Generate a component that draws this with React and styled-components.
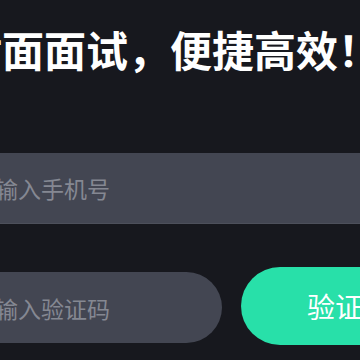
import styled, { createGlobalStyle } from 'styled-components'

const GlobalStyle = createGlobalStyle`
  html, body {
    margin: 0;
    padding: 0;
    background: #17181e;
  }
  body {
    font-family: "Noto Sans CJK SC", "Noto Sans", sans-serif;
  }
`

const Screen = styled.div`
  width: 360px;
  height: 360px;
  overflow: hidden;
  background: #17181e;
`

const Content = styled.div`
  width: 535px;
  margin-left: -78px;
  padding-top: 28px;
  display: flex;
  flex-direction: column;
`

const Title = styled.h1`
  margin: 0 0 0 -4px;
  font-size: 42px;
  line-height: 41px;
  font-weight: 700;
  color: #ffffff;
  white-space: nowrap;
`

const Fields = styled.div`
  margin-top: 84px;
  margin-left: 22px;
  display: flex;
  flex-direction: column;
  gap: 43px;
`

const Input = styled.input`
  box-sizing: border-box;
  height: 71px;
  width: 100%;
  padding: 0 0 0 28px;
  border: none;
  outline: none;
  background: #434652;
  border-radius: ${(p) => (p.$pill ? '36px' : '0')};
  border-bottom: ${(p) => (p.$pill ? 'none' : '1px solid #4d505b')};
  font-family: "Noto Sans CJK SC", "Noto Sans", sans-serif;
  font-size: 23px;
  color: #ffffff;

  &::placeholder {
    color: #858892;
  }
`

const CodeRow = styled.div`
  display: flex;
  align-items: center;
  gap: 19px;

  > input {
    flex: 1 1 auto;
    margin-top: 3px;
  }
`

const CodeButton = styled.button`
  flex: 0 0 216px;
  height: 78px;
  border: none;
  border-radius: 39px;
  background: #28e0a9;
  color: #ffffff;
  font-family: "Noto Sans CJK SC", "Noto Sans", sans-serif;
  font-size: 28px;
  padding: 0;
  cursor: pointer;
`

export default function App() {
  return (
    <>
      <GlobalStyle />
      <Screen>
        <Content>
          <Title>面对面面试，便捷高效！</Title>
          <Fields>
            <Input type="tel" placeholder="请输入手机号" />
            <CodeRow>
              <Input $pill type="text" placeholder="请输入验证码" />
              <CodeButton>验证码</CodeButton>
            </CodeRow>
          </Fields>
        </Content>
      </Screen>
    </>
  )
}
